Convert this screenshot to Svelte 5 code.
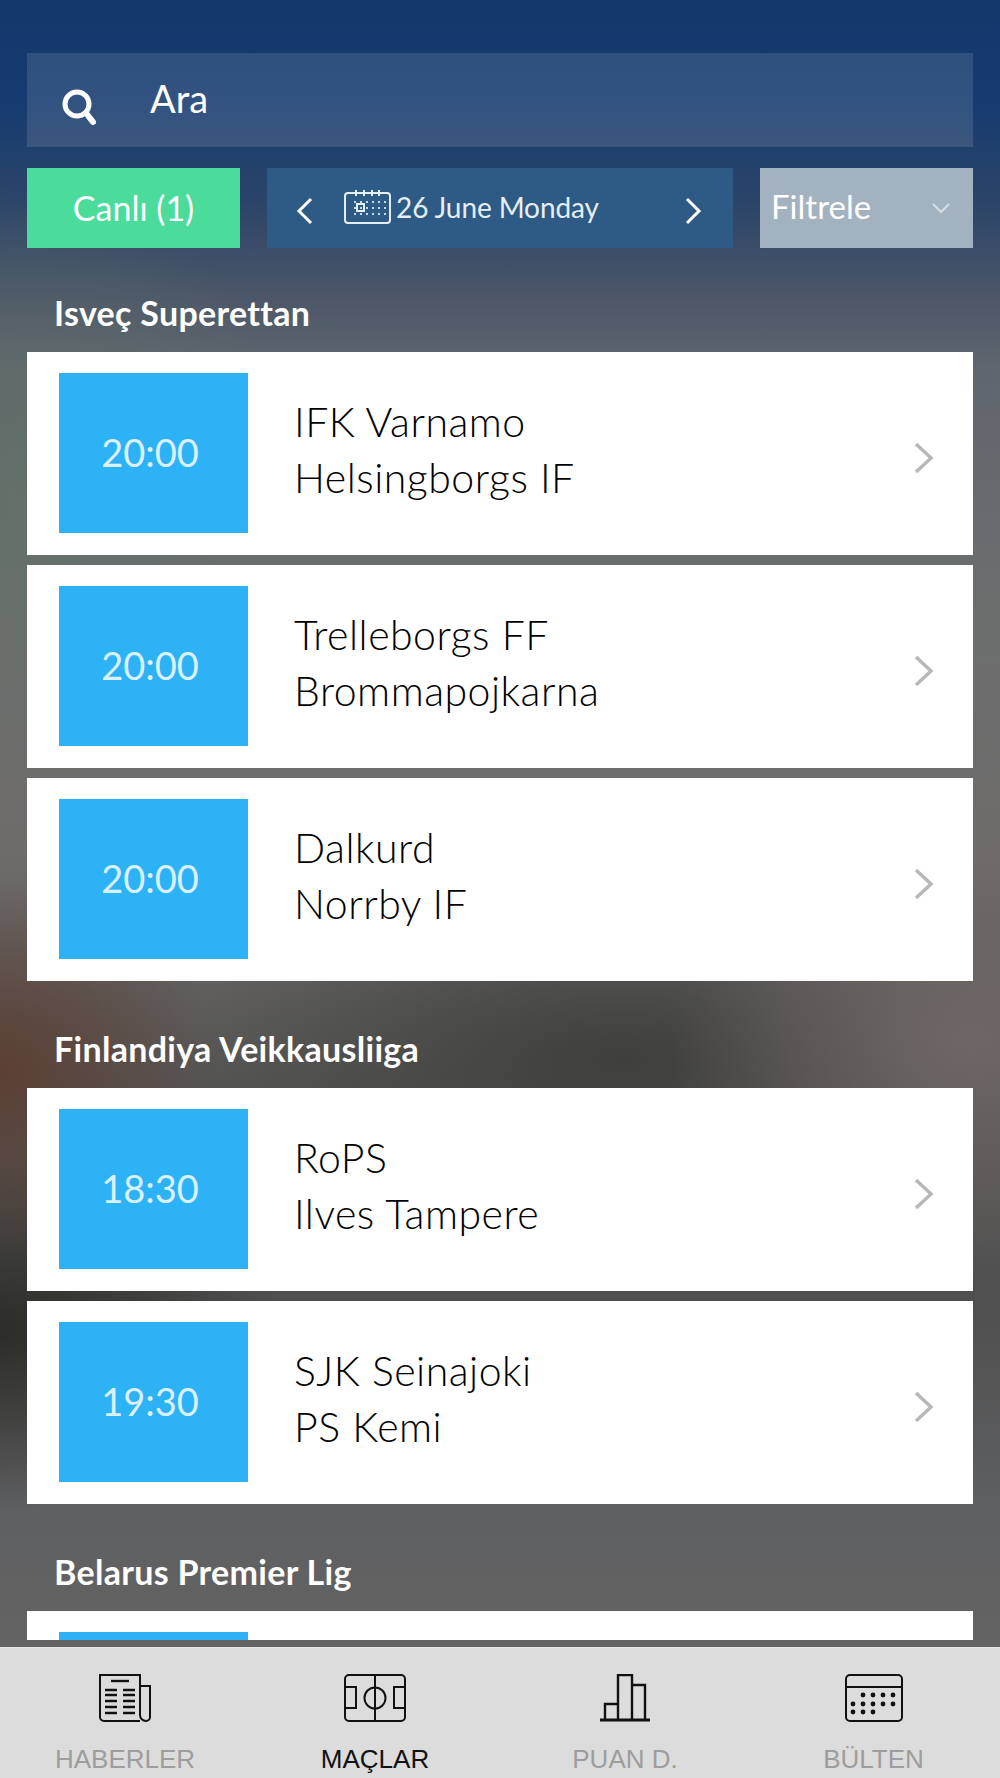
<script>
  const groups = [
    {
      title: 'Isveç Superettan',
      matches: [
        { time: '20:00', home: 'IFK Varnamo', away: 'Helsingborgs IF' },
        { time: '20:00', home: 'Trelleborgs FF', away: 'Brommapojkarna' },
        { time: '20:00', home: 'Dalkurd', away: 'Norrby IF' }
      ]
    },
    {
      title: 'Finlandiya Veikkausliiga',
      matches: [
        { time: '18:30', home: 'RoPS', away: 'Ilves Tampere' },
        { time: '19:30', home: 'SJK Seinajoki', away: 'PS Kemi' }
      ]
    },
    {
      title: 'Belarus Premier Lig',
      matches: [{ time: '', home: '', away: '' }]
    }
  ];

  const newsRows = [16, 21, 27, 33, 39];
  const calRows = [
    { y: 21, xs: [18, 28, 38, 48] },
    { y: 30, xs: [8, 18, 28, 38, 48] },
    { y: 38, xs: [8, 18, 28] }
  ];
  const miniRows = [11, 17, 23];
  const miniCols = [10, 16, 22, 28, 34, 40];
</script>

<div class="page">
  <div class="scroll">
    <div class="search">
      <svg class="search-icon" width="38" height="38" viewBox="0 0 38 38">
        <circle cx="16" cy="16" r="12" fill="none" stroke="#fff" stroke-width="5" />
        <path d="M25 25 L32 34" stroke="#fff" stroke-width="6" stroke-linecap="round" />
      </svg>
      <span class="search-text">Ara</span>
    </div>

    <div class="controls">
      <div class="live">Canlı (1)</div>
      <div class="date">
        <svg class="arrow" width="18" height="28" viewBox="0 0 18 28">
          <path d="M15 2 L3 14 L15 26" fill="none" stroke="#fff" stroke-width="3" />
        </svg>
        <div class="date-mid">
          <svg width="47" height="34" viewBox="0 0 47 34">
            <rect x="1" y="3" width="45" height="30" rx="3" fill="none" stroke="#e6eef5" stroke-width="2" />
            <path d="M12 0 V6 M20 0 V6 M28 0 V6 M35 0 V6" stroke="#e6eef5" stroke-width="2" />
            <rect x="13" y="14" width="7" height="7" fill="none" stroke="#e6eef5" stroke-width="2" />
            {#each miniRows as y}
              {#each miniCols as x}
                <rect x={x} y={y} width="2" height="2" fill="#c7d6e4" />
              {/each}
            {/each}
          </svg>
          <span>26 June Monday</span>
        </div>
        <svg class="arrow" width="18" height="28" viewBox="0 0 18 28">
          <path d="M3 2 L15 14 L3 26" fill="none" stroke="#fff" stroke-width="3" />
        </svg>
      </div>
      <div class="filter">
        <span>Filtrele</span>
        <svg width="20" height="12" viewBox="0 0 20 12">
          <path d="M2 2 L10 10 L18 2" fill="none" stroke="#d5dde4" stroke-width="2" />
        </svg>
      </div>
    </div>

    {#each groups as group}
      <section class="group">
        <h2>{group.title}</h2>
        {#each group.matches as match}
          <div class="card">
            <div class="time">{match.time}</div>
            <div class="teams">
              <div>{match.home}</div>
              <div>{match.away}</div>
            </div>
            <svg class="more" width="22" height="32" viewBox="0 0 22 32">
              <path d="M3 2 L18 16 L3 30" fill="none" stroke="#b8b8b8" stroke-width="3.5" />
            </svg>
          </div>
        {/each}
      </section>
    {/each}
  </div>

  <nav class="tabs">
    <div class="tab">
      <svg width="52" height="48" viewBox="0 0 52 48" fill="none" stroke="#111" stroke-width="2">
        <path d="M41 47 H5 a4 4 0 0 1 -4 -4 V1 H41 V41 a6 6 0 0 0 6 6 a4 4 0 0 0 4 -4 V12 H41" />
        <path d="M12 7 H30" stroke-width="2.4" />
        {#each newsRows as y}
          <path d="M6 {y} H18 M24 {y} H36" stroke-width="2.4" />
        {/each}
      </svg>
      <span>HABERLER</span>
    </div>
    <div class="tab active">
      <svg width="62" height="48" viewBox="0 0 62 48" fill="none" stroke="#111" stroke-width="2">
        <rect x="1" y="1" width="60" height="46" rx="4" />
        <path d="M31 1 V47" />
        <circle cx="31" cy="24" r="10.5" />
        <path d="M1 13 H12 V34 H1 M61 13 H50 V34 H61" />
      </svg>
      <span>MAÇLAR</span>
    </div>
    <div class="tab">
      <svg width="50" height="48" viewBox="0 0 50 48" fill="none" stroke="#111" stroke-width="2.4">
        <path d="M5 46 V30 H18 V46 M18 46 V1 H32 V46 M32 11 H45 V46" />
        <path d="M0 46 H50" stroke-width="3" />
      </svg>
      <span>PUAN D.</span>
    </div>
    <div class="tab">
      <svg width="58" height="48" viewBox="0 0 58 48" fill="none" stroke="#111" stroke-width="2">
        <rect x="1" y="1" width="56" height="46" rx="4" />
        <path d="M1 13 H57" />
        {#each calRows as row}
          {#each row.xs as x}
            <circle cx={x} cy={row.y} r="2.4" fill="#111" stroke="none" />
          {/each}
        {/each}
      </svg>
      <span>BÜLTEN</span>
    </div>
  </nav>
</div>

<style>
  :global(body) {
    margin: 0;
  }

  .page {
    width: 1000px;
    height: 1778px;
    display: flex;
    flex-direction: column;
    overflow: hidden;
    font-family: Lato, "Open Sans", sans-serif;
    background:
      radial-gradient(ellipse 300px 240px at 970px 1040px, rgba(112, 104, 102, 0.95), rgba(112, 104, 102, 0)),
      radial-gradient(ellipse 440px 180px at 620px 1060px, rgba(60, 60, 58, 0.9), rgba(60, 60, 58, 0)),
      radial-gradient(ellipse 220px 190px at 0 1070px, rgba(92, 62, 50, 0.95), rgba(92, 62, 50, 0)),
      radial-gradient(ellipse 280px 180px at 0 1330px, rgba(42, 42, 38, 0.95), rgba(42, 42, 38, 0)),
      radial-gradient(ellipse 260px 300px at 30px 480px, rgba(96, 116, 100, 0.55), rgba(96, 116, 100, 0)),
      linear-gradient(180deg, #123769 0, #163b70 100px, #2a4469 200px, #4a5568 290px, #60666e 370px, #6c6e6e 600px, #6e6c6b 850px, #545453 1100px, #4f4f4f 1300px, #5e5f61 1500px, #636363 1647px);
  }

  .scroll {
    height: 1640px;
    flex: none;
    overflow: hidden;
    padding: 53px 27px 0;
    box-sizing: border-box;
  }

  .search {
    height: 94px;
    display: flex;
    align-items: center;
    background: rgba(255, 255, 255, 0.12);
    color: #fff;
    font-size: 38px;
  }

  .search-icon {
    margin: 14px 0 0 34px;
    flex: none;
  }

  .search-text {
    margin-left: 51px;
    margin-top: -4px;
  }

  .controls {
    display: flex;
    gap: 27px;
    margin-top: 21px;
    height: 80px;
  }

  .live {
    width: 213px;
    padding-bottom: 2px;
    box-sizing: border-box;
    display: flex;
    align-items: center;
    justify-content: center;
    background: #4bdc9b;
    color: #fff;
    font-size: 34px;
  }

  .date {
    width: 466px;
    box-sizing: border-box;
    padding: 6px 31px 0 29px;
    display: flex;
    align-items: center;
    justify-content: space-between;
    background: #2e5a86;
    color: #e6eef5;
    font-size: 28px;
  }

  .date-mid {
    display: flex;
    align-items: center;
    gap: 5px;
    margin: -8px auto 0 30px;
    letter-spacing: -0.1px;
  }

  .filter {
    width: 213px;
    box-sizing: border-box;
    padding: 0 22px 4px 11px;
    display: flex;
    align-items: center;
    justify-content: space-between;
    background: #a3b2c0;
    color: #fff;
    font-size: 33px;
  }

  .filter svg {
    margin-top: 4px;
  }

  .group {
    margin-top: 50px;
  }

  .controls + .group {
    margin-top: 47px;
  }

  h2 {
    margin: 0 0 19px 27px;
    height: 38px;
    line-height: 36px;
    font-size: 34px;
    font-weight: 700;
    letter-spacing: 0.3px;
    color: #fff;
  }

  .card {
    height: 203px;
    box-sizing: border-box;
    margin-bottom: 10px;
    padding: 21px 38px 0 32px;
    display: flex;
    align-items: flex-start;
    background: #fff;
  }

  .time {
    width: 189px;
    height: 160px;
    flex: none;
    display: flex;
    align-items: center;
    justify-content: center;
    padding: 0 7px 3px 0;
    box-sizing: border-box;
    background: #2eb2f6;
    color: #d9f1ff;
    font-size: 38px;
    font-weight: 400;
  }

  .teams {
    flex: 1;
    margin-left: 46px;
    padding-top: 21px;
    font-size: 41px;
    font-weight: 300;
    letter-spacing: 0.5px;
    line-height: 56px;
    color: #000;
  }

  .more {
    margin-top: 69px;
    flex: none;
  }

  .tabs {
    flex: 1;
    margin-top: 7px;
    display: grid;
    grid-template-columns: repeat(4, 1fr);
    background: #dcdcdc;
    border-top: 1px solid #e6e6e6;
  }

  .tab {
    display: flex;
    flex-direction: column;
    align-items: center;
    padding-top: 26px;
    font-family: "Liberation Sans", Arial, sans-serif;
    font-size: 26px;
    color: #9d9d9d;
  }

  .tab span {
    margin-top: 22px;
    line-height: 30px;
  }

  .tab.active {
    color: #111;
  }

  .tab:last-child {
    padding-right: 3px;
  }
</style>
